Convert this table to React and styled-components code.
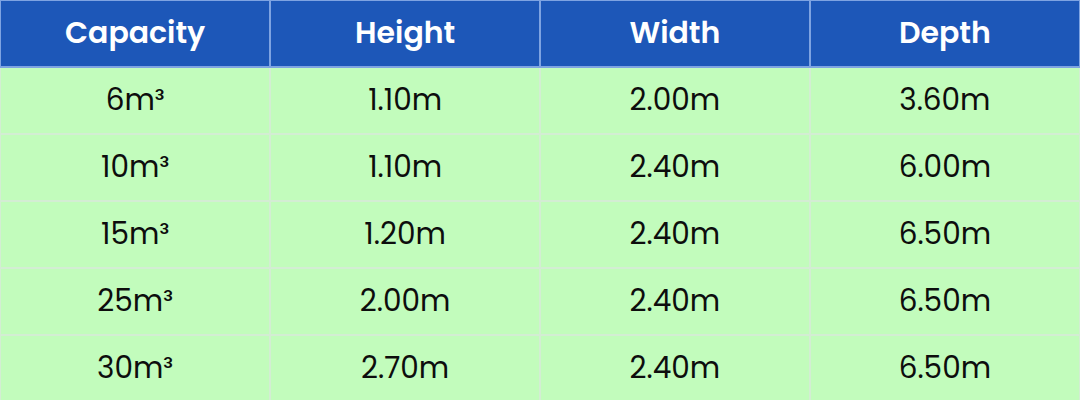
import React from "react";
import styled, { createGlobalStyle } from "styled-components";

const Global = createGlobalStyle`
  html, body { margin: 0; padding: 0; background: #c2fcbc; }
  body { font-family: Poppins, Inter, "Open Sans", sans-serif; }
`;

const Table = styled.table`
  width: 1080px;
  border-collapse: collapse;
  table-layout: fixed;
`;

const HeadRow = styled.tr`
  height: 66px;
`;

const BodyRow = styled.tr`
  height: 67px;
  &:last-child td { border-bottom-width: 1px; }
`;

const Head = styled.th`
  padding: 0;
  background: #1d57b8;
  color: #ffffff;
  font-family: Poppins, Inter, "Open Sans", sans-serif;
  font-weight: 600;
  font-size: 30px;
  text-align: center;
  border: 2px solid #7ea3e2;
  border-top-width: 1px;
  &:first-child { border-left-width: 1px; }
  &:last-child { border-right-width: 1px; }
`;

const Cell = styled.td`
  padding: 0;
  background: #c2fcbc;
  color: #0d0d0d;
  font-family: Poppins, Inter, "Open Sans", sans-serif;
  font-weight: 400;
  font-size: 29.5px;
  text-align: center;
  border: 2px solid #d3edd3;
  &:first-child { border-left-width: 1px; }
  &:last-child { border-right-width: 1px; }
`;

const headers = ["Capacity", "Height", "Width", "Depth"];
const rows = [
  ["6m³", "1.10m", "2.00m", "3.60m"],
  ["10m³", "1.10m", "2.40m", "6.00m"],
  ["15m³", "1.20m", "2.40m", "6.50m"],
  ["25m³", "2.00m", "2.40m", "6.50m"],
  ["30m³", "2.70m", "2.40m", "6.50m"],
];

export default function App() {
  return (
    <>
      <Global />
      <Table>
        <thead>
          <HeadRow>
            {headers.map((h) => (
              <Head key={h}>{h}</Head>
            ))}
          </HeadRow>
        </thead>
        <tbody>
          {rows.map((r, i) => (
            <BodyRow key={i}>
              {r.map((c, j) => (
                <Cell key={j}>{c}</Cell>
              ))}
            </BodyRow>
          ))}
        </tbody>
      </Table>
    </>
  );
}
